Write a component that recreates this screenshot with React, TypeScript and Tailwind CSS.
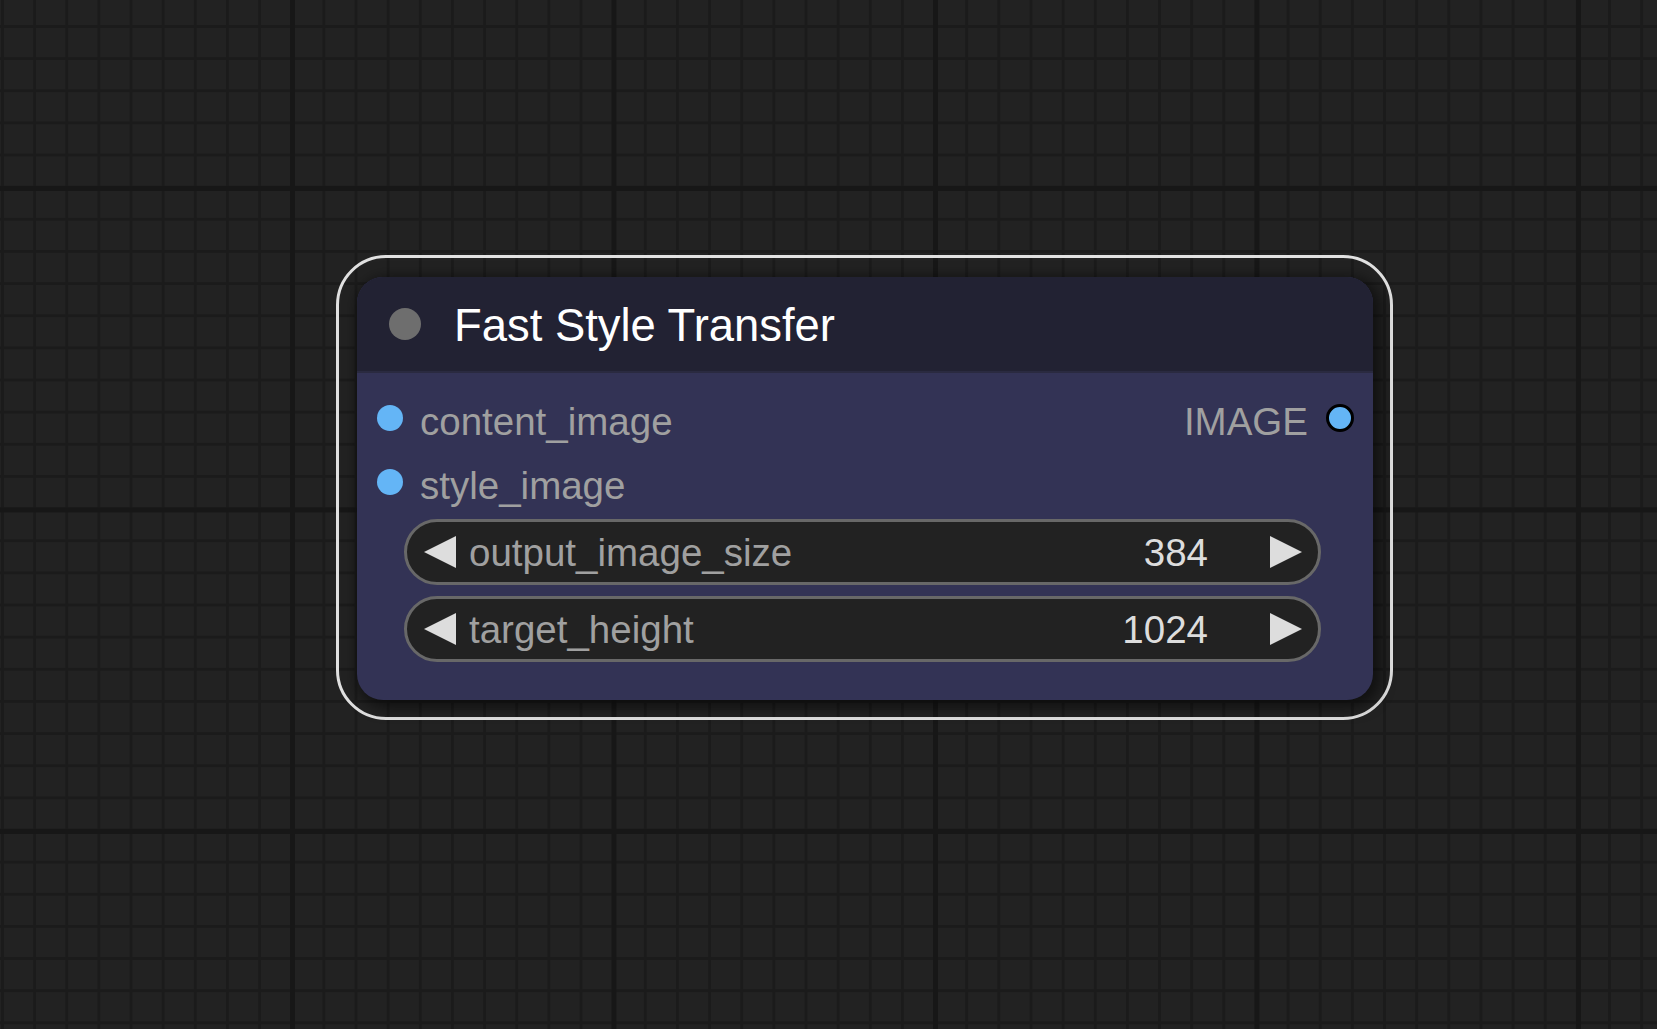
import React from "react";

const inputs = ["content_image", "style_image"];

const widgets = [
  { name: "output_image_size", value: "384" },
  { name: "target_height", value: "1024" },
];

function Arrow({ dir }: { dir: "left" | "right" }) {
  return (
    <svg width="32" height="32" viewBox="0 0 32 32" className="shrink-0">
      <polygon
        points={dir === "left" ? "32,0 0,16 32,32" : "0,0 32,16 0,32"}
        fill="#dddddd"
      />
    </svg>
  );
}

function NumberWidget({ name, value }: { name: string; value: string }) {
  return (
    <div className="flex h-[66px] items-center rounded-full border-[3px] border-[#686868] bg-[#222222] pl-[17px] pr-[16px]">
      <Arrow dir="left" />
      <span className="ml-[13px] flex-1 pt-[3px] text-[38.5px] leading-none text-[#a0a0a0]">
        {name}
      </span>
      <span className="pt-[3px] text-[38.5px] leading-none text-[#dddddd]">{value}</span>
      <span className="w-[62px]" />
      <Arrow dir="right" />
    </div>
  );
}

export default function App() {
  return (
    <div className="relative h-[1029px] w-[1657px] overflow-hidden bg-[#222222] bg-[linear-gradient(to_right,#171717_5px,transparent_5px),linear-gradient(to_bottom,#171717_5px,transparent_5px),linear-gradient(to_right,#1b1b1b_3px,transparent_3px),linear-gradient(to_bottom,#1b1b1b_3px,transparent_3px)] bg-[size:321.5px_321.5px,321.5px_321.5px,32.15px_32.15px,32.15px_32.15px] bg-[position:290px_186px,290px_186px,1px_25px,1px_25px] font-['Liberation_Sans',Arial,sans-serif]">
      {/* selected node on the canvas */}
      <div className="absolute left-[336px] top-[255px] h-[465px] w-[1057px] rounded-[50px] border-[3px] border-[#e0e0e0] pb-[17px] pl-[18px] pr-[17px] pt-[19px]">
        <div className="flex h-full flex-col overflow-hidden rounded-[26px] bg-[#333355] shadow-[4px_4px_14px_4px_rgba(0,0,0,0.5)]">
          {/* title bar */}
          <div className="flex h-[96px] shrink-0 items-center border-b-2 border-[#2a2a40] bg-[#222233] pl-[32px]">
            <span className="h-[32px] w-[32px] rounded-full bg-[#6e6e6e]" />
            <span className="ml-[33px] pt-[4px] text-[45.4px] leading-none text-white">
              Fast Style Transfer
            </span>
          </div>

          {/* slots */}
          <div className="flex flex-col pt-[13px]">
            {inputs.map((slot, i) => (
              <div key={slot} className="flex h-[64px] items-center pl-[20px] pr-[19px]">
                <span className="h-[26px] w-[26px] shrink-0 rounded-full bg-[#64b5f6]" />
                <span className="ml-[17px] flex-1 pt-[8px] text-[38.5px] leading-none text-[#a0a0a0]">
                  {slot}
                </span>
                {i === 0 && (
                  <>
                    <span className="pt-[8px] text-[38.5px] leading-none text-[#a0a0a0]">IMAGE</span>
                    <span className="ml-[18px] h-[28px] w-[28px] shrink-0 rounded-full border-[3px] border-black bg-[#64b5f6]" />
                  </>
                )}
              </div>
            ))}
          </div>

          {/* widgets */}
          <div className="ml-[47px] mr-[52px] mt-[5px] flex flex-col gap-[11px]">
            {widgets.map((w) => (
              <NumberWidget key={w.name} name={w.name} value={w.value} />
            ))}
          </div>
        </div>
      </div>
    </div>
  );
}
